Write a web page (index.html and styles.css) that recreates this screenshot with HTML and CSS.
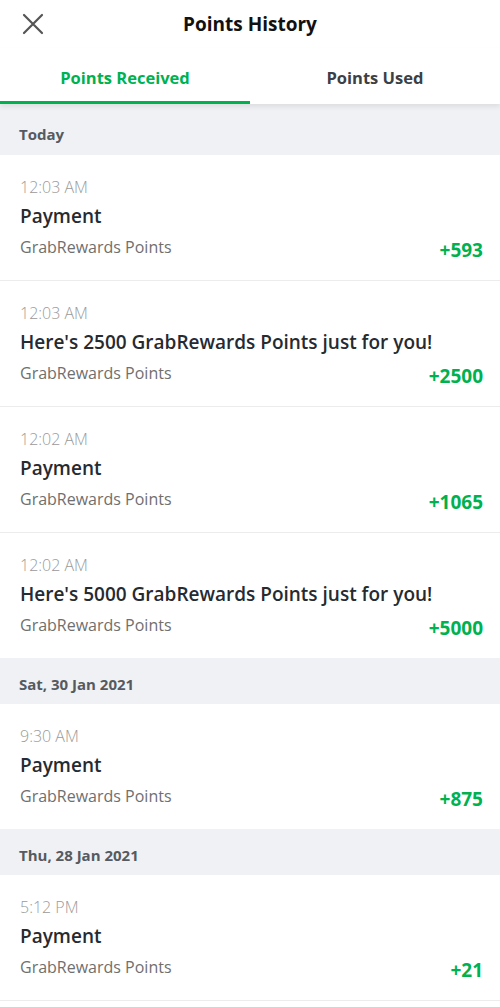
FILE: index.html
```html
<!DOCTYPE html>
<html lang="en">
<head>
  <meta charset="UTF-8">
  <title>Points History</title>
  <meta name="viewport" content="width=device-width, initial-scale=1.0">
  <link rel="stylesheet" href="styles.css">
</head>
<body>

  <header class="top-bar">
    <button class="close-btn" aria-label="Close">
      <svg width="22" height="22" viewBox="0 0 22 22"><path d="M2 2 L20 20 M20 2 L2 20" stroke="#555" stroke-width="2.2" stroke-linecap="round" fill="none"/></svg>
    </button>
    <h1>Points History</h1>
  </header>

  <nav class="tabs">
    <div class="tab active">Points Received</div>
    <div class="tab">Points Used</div>
  </nav>

  <main class="history">
    <div class="day">Today</div>
    <div class="entry">
      <div class="time">12:03 AM</div>
      <div class="title">Payment</div>
      <div class="row"><span class="source">GrabRewards Points</span><span class="amount">+593</span></div>
    </div>
    <div class="entry">
      <div class="time">12:03 AM</div>
      <div class="title">Here's 2500 GrabRewards Points just for you!</div>
      <div class="row"><span class="source">GrabRewards Points</span><span class="amount">+2500</span></div>
    </div>
    <div class="entry">
      <div class="time">12:02 AM</div>
      <div class="title">Payment</div>
      <div class="row"><span class="source">GrabRewards Points</span><span class="amount">+1065</span></div>
    </div>
    <div class="entry last">
      <div class="time">12:02 AM</div>
      <div class="title">Here's 5000 GrabRewards Points just for you!</div>
      <div class="row"><span class="source">GrabRewards Points</span><span class="amount">+5000</span></div>
    </div>

    <div class="day">Sat, 30 Jan 2021</div>
    <div class="entry last">
      <div class="time">9:30 AM</div>
      <div class="title">Payment</div>
      <div class="row"><span class="source">GrabRewards Points</span><span class="amount">+875</span></div>
    </div>

    <div class="day">Thu, 28 Jan 2021</div>
    <div class="entry">
      <div class="time">5:12 PM</div>
      <div class="title">Payment</div>
      <div class="row"><span class="source">GrabRewards Points</span><span class="amount">+21</span></div>
    </div>
  </main>

</body>
</html>
```

FILE: styles.css
```css
:root {
  --green: #00b14f;
  --text-dark: #262a31;
  --text-grey: #6f6f6f;
  --day-bg: #f0f1f4;
}

body {
  font-family: 'Open Sans', 'Noto Sans', sans-serif;
  margin: 0;
  background: white;
  color: var(--text-dark);
}

.top-bar {
  height: 48px;
  display: flex;
  align-items: center;
  justify-content: center;
  position: relative;
}

.close-btn {
  position: absolute;
  left: 22px;
  top: 13px;
  background: none;
  border: none;
  padding: 0;
  width: 22px;
  height: 22px;
}

.top-bar h1 {
  margin: 0;
  font-size: 19px;
  font-weight: 700;
  color: #111;
}

.tabs {
  display: flex;
  height: 56px;
  box-shadow: 0 3px 5px rgba(0, 0, 0, 0.08);
  position: relative;
}

.tab {
  flex: 1;
  display: flex;
  align-items: center;
  justify-content: center;
  font-size: 16.5px;
  font-weight: 700;
  color: #3c3f45;
  padding: 6px 0 3px;
}

.tab.active {
  color: var(--green);
  border-bottom: 3px solid var(--green);
  padding-bottom: 0;
}

.day {
  background: var(--day-bg);
  height: 46px;
  box-sizing: border-box;
  display: flex;
  align-items: center;
  padding: 6px 19px 0;
  font-size: 15px;
  font-weight: 700;
  color: #555a60;
}

.history > .day:first-child {
  height: 51px;
  padding-top: 9px;
}

.entry {
  height: 126px;
  padding: 21px 17px 0 20px;
  box-sizing: border-box;
  border-bottom: 1px solid #ececec;
}

.entry.last {
  height: 125px;
  border-bottom: none;
}

.time {
  font-size: 16px;
  font-weight: 300;
  color: #9a9a9a;
  line-height: 22px;
}

.title {
  font-size: 19px;
  font-weight: 600;
  line-height: 28px;
  margin-top: 4px;
}

.row {
  display: flex;
  justify-content: space-between;
  align-items: flex-end;
  margin-top: 5px;
}

.source {
  font-size: 16px;
  color: var(--text-grey);
  line-height: 24px;
}

.amount {
  font-size: 19px;
  font-weight: 700;
  color: var(--green);
  line-height: 24px;
  margin-bottom: -3px;
}
```
